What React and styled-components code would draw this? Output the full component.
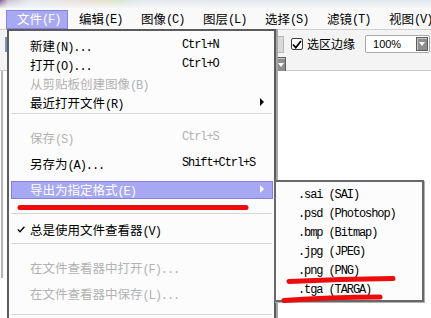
import React from 'react'
import styled, { createGlobalStyle } from 'styled-components'

const GlobalStyle = createGlobalStyle`
  html, body { margin: 0; padding: 0; background: #fff; }
  body { overflow: hidden; font-family: "Noto Sans CJK SC", sans-serif; }
`

const CJK = /([\u3000-\u9fff\uff00-\uffef]+)/

function Text({ children }) {
  return String(children)
    .split(CJK)
    .filter(Boolean)
    .map((part, i) => (CJK.test(part) ? <Han key={i}>{part}</Han> : <Latin key={i}>{part}</Latin>))
}

export default function App() {
  return (
    <>
      <GlobalStyle />
      <Screen>
        <TitleStrip />
        <MenuBar>
          <MenuTitle $active>
            <Text>文件(F)</Text>
          </MenuTitle>
          <MenuTitle>
            <Text>编辑(E)</Text>
          </MenuTitle>
          <MenuTitle>
            <Text>图像(C)</Text>
          </MenuTitle>
          <MenuTitle>
            <Text>图层(L)</Text>
          </MenuTitle>
          <MenuTitle>
            <Text>选择(S)</Text>
          </MenuTitle>
          <MenuTitle>
            <Text>滤镜(T)</Text>
          </MenuTitle>
          <MenuTitle>
            <Text>视图(V)</Text>
          </MenuTitle>
        </MenuBar>

        <ToolBar>
          <ToolRow>
            <BlueTick />
            <GrayButton />
            <CheckBox>
              <svg width="10" height="9" viewBox="0 0 10 9">
                <polyline points="1,4.5 3.8,7.5 9,1" fill="none" stroke="#000" strokeWidth="1.8" />
              </svg>
            </CheckBox>
            <ToolLabel>选区边缘</ToolLabel>
            <Combo>
              <ComboValue>100%</ComboValue>
              <DropButton $w={12} $h={14}>
                <DownArrow />
              </DropButton>
            </Combo>
          </ToolRow>
          <ToolRow $second>
            <DropButton $w={11} $h={16}>
              <DownArrow />
            </DropButton>
          </ToolRow>
        </ToolBar>

        <Workspace>
          <LeftRail />
        </Workspace>

        <Menu>
          <Row $h={19}>
            <span />
            <Label><Text>新建(N)...</Text></Label>
            <Shortcut>Ctrl+N</Shortcut>
          </Row>
          <Row $h={19}>
            <span />
            <Label><Text>打开(O)...</Text></Label>
            <Shortcut>Ctrl+O</Shortcut>
          </Row>
          <Row $h={19} $disabled>
            <span />
            <Label><Text>从剪贴板创建图像(B)</Text></Label>
          </Row>
          <Row $h={19}>
            <span />
            <Label><Text>最近打开文件(R)</Text></Label>
            <span />
            <Arrow />
          </Row>
          <Separator $top={2} $bottom={9} />
          <Row $h={26} $disabled>
            <span />
            <Label><Text>保存(S)</Text></Label>
            <Shortcut>Ctrl+S</Shortcut>
          </Row>
          <Row $h={26}>
            <span />
            <Label><Text>另存为(A)...</Text></Label>
            <Shortcut>Shift+Ctrl+S</Shortcut>
          </Row>
          <Row $h={26} $active>
            <span />
            <Label><Text>导出为指定格式(E)</Text></Label>
            <span />
            <Arrow $light />
          </Row>
          <Separator $top={11} $bottom={1} />
          <Row $h={26}>
            <Check>
              <svg width="8" height="7" viewBox="0 0 8 7">
                <polyline points="0.8,3.4 3,5.8 7.4,0.8" fill="none" stroke="#000" strokeWidth="1.3" />
              </svg>
            </Check>
            <Label><Text>总是使用文件查看器(V)</Text></Label>
          </Row>
          <Separator $top={1} $bottom={9} />
          <Row $h={26} $disabled>
            <span />
            <Label><Text>在文件查看器中打开(F)...</Text></Label>
          </Row>
          <Row $h={26} $disabled>
            <span />
            <Label><Text>在文件查看器中保存(L)...</Text></Label>
          </Row>
          <Separator $top={8} $bottom={0} />
        </Menu>

        <SubMenu>
          {['.sai (SAI)', '.psd (Photoshop)', '.bmp (Bitmap)', '.jpg (JPEG)', '.png (PNG)', '.tga (TARGA)'].map((f) => (
            <SubItem key={f}>{f}</SubItem>
          ))}
        </SubMenu>

        <Marks width="431" height="318" viewBox="0 0 431 318">
          <path d="M20 207.5 L246 207.5" />
          <path d="M289 281.5 Q 340 279 393 278.5" />
          <path d="M284 300.5 Q 330 297 380 297" />
        </Marks>
      </Screen>
    </>
  )
}

const Screen = styled.div`
  position: relative;
  width: 431px;
  height: 318px;
  overflow: hidden;
  display: flex;
  flex-direction: column;
  background: #fff;
`

const Han = styled.span`
  font-family: "Noto Sans CJK SC", sans-serif;
  font-size: 12.5px;
`

const Latin = styled.span`
  font-family: "Liberation Mono", monospace;
  font-size: 12px;
  letter-spacing: -1.1px;
`

const TitleStrip = styled.div`
  height: 8px;
  flex: none;
  background:
    linear-gradient(180deg, rgba(255, 255, 255, 0) 0, rgba(246, 247, 249, 0.9) 100%),
    linear-gradient(90deg, #7a5a8a 0, #cbbfd2 8px, #e4e9ef 30px, #e9dcd6 88px, #e6e2c8 105px, #d6e6d2 120px, #e4e9ef 140px, #e3e8ee 100%);
`

const MenuBar = styled.div`
  height: 22px;
  flex: none;
  box-sizing: border-box;
  display: flex;
  align-items: flex-start;
  padding: 2px 0 0 6px;
  background: #f9f9fa;
  border-bottom: 1px solid #cfcfcf;
`

const MenuTitle = styled.div`
  flex: none;
  width: 62px;
  height: 19px;
  box-sizing: border-box;
  display: flex;
  align-items: center;
  padding-left: 10px;
  line-height: 1;
  color: ${(p) => (p.$active ? '#fff' : '#000')};
  background: ${(p) => (p.$active ? '#a9a9f3' : 'transparent')};
  border: 1px solid ${(p) => (p.$active ? '#8585de' : 'transparent')};
`

const ToolBar = styled.div`
  height: 41px;
  flex: none;
  box-sizing: border-box;
  padding-top: 5px;
  background: #f4f4f4;
  border-bottom: 1px solid #c9c9c9;
`

const ToolRow = styled.div`
  display: flex;
  align-items: center;
  height: ${(p) => (p.$second ? 16 : 18)}px;
  margin-top: ${(p) => (p.$second ? 4 : 0)}px;
  padding-left: ${(p) => (p.$second ? 275 : 5)}px;
`

const BlueTick = styled.div`
  width: 2px;
  height: 15px;
  background: #7d8fbd;
`

const GrayButton = styled.div`
  margin-left: 270px;
  width: 7px;
  height: 17px;
  box-sizing: border-box;
  background: #d9d9d9;
  border: 1px solid #b8b8b8;
  border-left: none;
`

const CheckBox = styled.div`
  margin-left: 7px;
  width: 12px;
  height: 12px;
  box-sizing: border-box;
  border: 1px solid #3c3c3c;
  border-radius: 2px;
  background: #fff;
  display: flex;
  align-items: center;
  justify-content: center;
`

const ToolLabel = styled.span`
  margin-left: 4px;
  font-size: 12px;
  line-height: 1;
  color: #000;
`

const Combo = styled.div`
  margin-left: 10px;
  width: 65px;
  height: 18px;
  box-sizing: border-box;
  display: flex;
  align-items: center;
  justify-content: space-between;
  padding: 0 1px 0 7px;
  background: #fff;
  border: 1px solid #a8a8a8;
  border-radius: 2px;
`

const ComboValue = styled.span`
  font-family: "Liberation Sans", Arial, sans-serif;
  font-size: 11px;
  color: #000;
`

const DropButton = styled.div`
  width: ${(p) => p.$w}px;
  height: ${(p) => p.$h}px;
  box-sizing: border-box;
  display: flex;
  align-items: center;
  justify-content: center;
  background: #8e8e8e;
  border: 1px solid #5d5d5d;
  box-shadow: inset 1px 1px 0 #c4c4c4;
`

const DownArrow = styled.span`
  width: 0;
  height: 0;
  border-left: 3px solid transparent;
  border-right: 3px solid transparent;
  border-top: 4px solid #fff;
`

const Workspace = styled.div`
  flex: 1;
  display: flex;
  background: #fff;
`

const LeftRail = styled.div`
  margin-left: 1px;
  width: 2px;
  height: 207px;
  background: #b4b4b4;
`

const Menu = styled.div`
  position: absolute;
  left: 7px;
  top: 29px;
  width: 269px;
  height: 300px;
  box-sizing: border-box;
  padding-top: 4px;
  display: flex;
  flex-direction: column;
  background: #fcfcfc;
  border: 2px solid #5c5c5c;
  border-bottom: none;
  box-shadow: 2px 0 0 #a6a6a6;
`

const Row = styled.div`
  position: relative;
  isolation: isolate;
  flex: none;
  height: ${(p) => p.$h}px;
  display: grid;
  grid-template-columns: 21px 152px 1fr 14px;
  align-items: center;
  line-height: 1;
  color: ${(p) => (p.$active ? '#fff' : p.$disabled ? '#b2b2b2' : '#000')};

  &::before {
    content: '';
    display: ${(p) => (p.$active ? 'block' : 'none')};
    position: absolute;
    z-index: -1;
    left: 2px;
    right: 1px;
    top: 5px;
    bottom: 3px;
    background: #a7a7f3;
    border: 1px solid #7f7fe0;
  }
`

const Label = styled.span`
  white-space: nowrap;
`

const Shortcut = styled.span`
  font-family: "Liberation Mono", monospace;
  font-size: 12px;
  letter-spacing: -1.1px;
  white-space: nowrap;
`

const Check = styled.span`
  display: flex;
  padding-left: 8px;
`

const Arrow = styled.span`
  width: 0;
  height: 0;
  border-top: 4px solid transparent;
  border-bottom: 4px solid transparent;
  border-left: 4px solid ${(p) => (p.$light ? '#fff' : '#000')};
`

const Separator = styled.div`
  flex: none;
  height: 1px;
  margin: ${(p) => p.$top}px 2px ${(p) => p.$bottom}px;
  background: #d6d6d6;
  border-bottom: 1px solid #fff;
`

const SubMenu = styled.div`
  position: absolute;
  left: 274px;
  top: 180px;
  width: 150px;
  height: 122px;
  box-sizing: border-box;
  padding: 3px 0 0 22px;
  background: #fcfcfc;
  border: 2px solid #686868;
  box-shadow: 1px 1px 0 #b0b0b0;
`

const SubItem = styled.div`
  height: 19px;
  display: flex;
  align-items: center;
  font-family: "Liberation Mono", monospace;
  font-size: 12px;
  letter-spacing: -1.1px;
  white-space: pre;
  color: #000;
`

const Marks = styled.svg`
  position: absolute;
  left: 0;
  top: 0;
  pointer-events: none;

  path {
    fill: none;
    stroke: #ee0b0b;
    stroke-width: 5;
    stroke-linecap: round;
  }
`
